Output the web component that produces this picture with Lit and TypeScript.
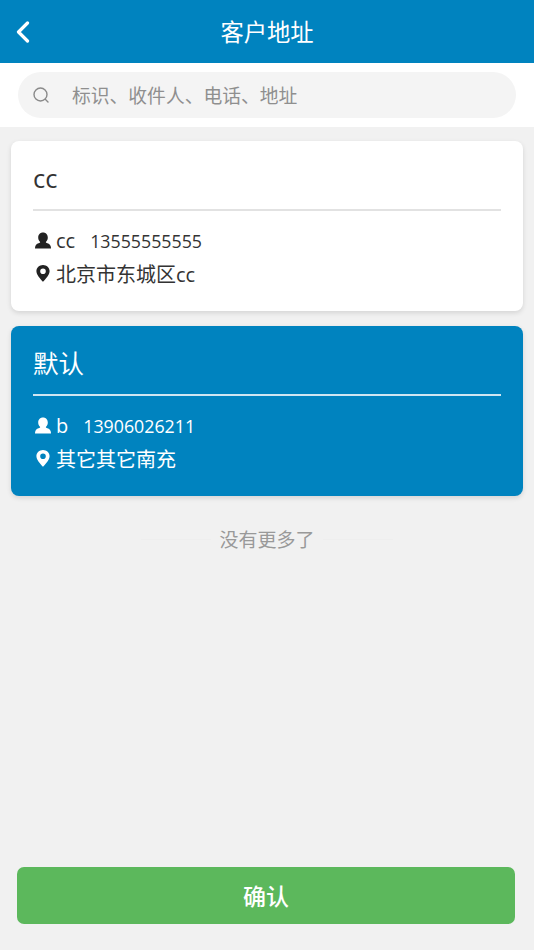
import { LitElement, html, css, svg } from "lit";
import { customElement } from "lit/decorators.js";

const person = svg`<path d="M8 0C5 0 3.200 2.200 3.200 5c0 2 .8 3.400 1.800 4.300.3.400.2.800-.2 1C3.300 11 1 11.500.4 13.500.1 14.300 0 15 0 16h16c0-1-.1-1.700-.4-2.500-.6-2-2.900-2.500-4.400-3.200-.4-.2-.5-.6-.2-1 1-.9 1.800-2.300 1.800-4.300C12.800 2.200 11 0 8 0z"/>`;
const pin = svg`<path fill-rule="evenodd" d="M7 0C3.300 0 .4 2.800.4 6.300.4 10.600 7 16.800 7 16.800s6.600-6.200 6.600-10.500C13.600 2.800 10.700 0 7 0zm0 3.500a2.800 2.800 0 1 1 0 5.600 2.800 2.800 0 0 1 0-5.600z"/>`;

interface Addr { tag: string; name: string; phone: string; addr: string; active: boolean; }
const items: Addr[] = [
  { tag: "cc", name: "cc", phone: "13555555555", addr: "北京市东城区cc", active: false },
  { tag: "默认", name: "b", phone: "13906026211", addr: "其它其它南充", active: true },
];

@customElement("app-root")
export class AppRoot extends LitElement {
  static styles = css`
    :host {
      display: flex; flex-direction: column; height: 950px; background: #f1f1f1; overflow: hidden;
      font-family: "Open Sans", "Noto Sans CJK SC", sans-serif; color: #333;
    }
    .head {
      height: 63px; background: #0083bf; color: #fff; display: flex; align-items: center; justify-content: center;
      position: relative; font-size: 23.300px; flex: none; padding-bottom: 2px; box-sizing: border-box;
    }
    .back { position: absolute; left: 16px; top: 21px; width: 14px; height: 22px; }
    .searchbar { background: #fff; height: 64px; padding: 9px 18px 0; box-sizing: border-box; flex: none; }
    .pill {
      height: 46px; border-radius: 23px; background: #f4f4f4; display: flex; align-items: center;
      padding-left: 14px; color: #8f8f8f; font-size: 18.800px; gap: 22px;
    }
    .pill svg { width: 18px; height: 18px; flex: none; }
    .list { padding: 14px 11px 0; display: flex; flex-direction: column; gap: 15px; }
    .card {
      height: 170px; box-sizing: border-box; border-radius: 8px; background: #fff; padding: 0 22px;
      box-shadow: 0 2px 5px rgba(0,0,0,.12); color: #333;
    }
    .card.on { background: #0083bf; color: #fff; }
    .tag {
      height: 70px; display: flex; align-items: center; font-size: 25.500px; border-bottom: 2px solid #e2e2e2;
      box-sizing: border-box; margin-bottom: 13px; padding-top: 5px;
    }
    .card.on .tag { border-bottom-color: #cfe6f2; padding-top: 3px; }
    .row { height: 33px; display: flex; align-items: center; font-size: 20px; box-sizing: border-box; }
    .row svg { width: 16px; height: 17px; flex: none; margin-left: 1.500px; margin-right: 5.500px; fill: #222; }
    .card.on .row svg { fill: #fff; }
    .phone { font-size: 17.800px; margin-left: 15px; }
    .nomore {
      margin-top: 28px; display: flex; align-items: center; justify-content: center; gap: 8px;
      color: #999; font-size: 19px; height: 30px;
    }
    .nomore i { width: 70px; height: 1px; background: #eeeeee; }
    .btnwrap { margin-top: auto; padding: 0 19px 26px 17px; }
    .btn {
      height: 57px; border-radius: 7px; background: #5cb85c; color: #fff; display: flex; align-items: center;
      justify-content: center; font-size: 23px; font-weight: 500; padding-bottom: 2px; box-sizing: border-box;
    }
  `;

  render() {
    return html`
      <div class="head">
        <svg class="back" viewBox="0 0 14 22" fill="none" stroke="#fff" stroke-width="3.200" stroke-linecap="round" stroke-linejoin="round"><path d="M11.500 2 2.500 11 11.500 20"/></svg>
        客户地址
      </div>
      <div class="searchbar">
        <div class="pill">
          <svg viewBox="0 0 18 18" fill="none" stroke="#8a8a8a" stroke-width="1.400" stroke-linecap="round"><circle cx="8.500" cy="8.500" r="6.500"/><path d="M13.500 13.500 16 16"/></svg>
          <span>标识、收件人、电话、地址</span>
        </div>
      </div>
      <div class="list">
        ${items.map((a) => html`
          <div class="card ${a.active ? "on" : ""}">
            <div class="tag">${a.tag}</div>
            <div class="row"><svg viewBox="0 0 16 16">${person}</svg><span>${a.name}</span><span class="phone">${a.phone}</span></div>
            <div class="row"><svg viewBox="0 0 14 17">${pin}</svg><span>${a.addr}</span></div>
          </div>`)}
      </div>
      <div class="nomore"><i></i><span>没有更多了</span><i></i></div>
      <div class="btnwrap"><div class="btn">确认</div></div>
    `;
  }
}
